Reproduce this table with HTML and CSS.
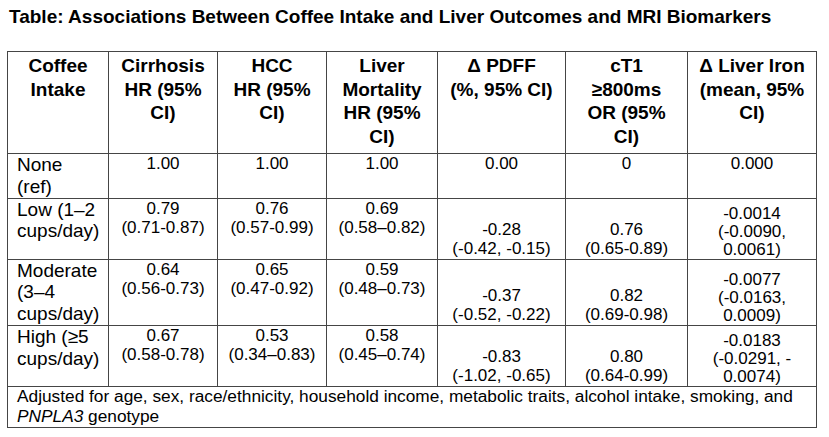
FILE: index.html
```html
<!DOCTYPE html>
<html lang="en">
<head>
<meta charset="utf-8">
<title>Coffee Intake and Liver Outcomes</title>
<link rel="stylesheet" href="styles.css">
</head>
<body>
<h1 class="title">Table: Associations Between Coffee Intake and Liver Outcomes and MRI Biomarkers</h1>
<table class="grid">
  <colgroup>
    <col class="w1"><col class="w2"><col class="w3"><col class="w4"><col class="w5"><col class="w6"><col class="w7">
  </colgroup>
  <thead>
    <tr class="r-head">
      <th>Coffee<br>Intake</th>
      <th>Cirrhosis<br>HR (95%<br>CI)</th>
      <th>HCC<br>HR (95%<br>CI)</th>
      <th>Liver<br>Mortality<br>HR (95%<br>CI)</th>
      <th>Δ PDFF<br>(%, 95% CI)</th>
      <th>cT1<br>≥800ms<br>OR (95%<br>CI)</th>
      <th>Δ Liver Iron<br>(mean, 95%<br>CI)</th>
    </tr>
  </thead>
  <tbody>
    <tr class="r-none">
      <td class="lbl">None<br>(ref)</td>
      <td class="num">1.00</td>
      <td class="num">1.00</td>
      <td class="num">1.00</td>
      <td class="num">0.00</td>
      <td class="num">0</td>
      <td class="num">0.000</td>
    </tr>
    <tr class="r-low">
      <td class="lbl">Low (1–2<br>cups/day)</td>
      <td class="num">0.79<br>(0.71-0.87)</td>
      <td class="num">0.76<br>(0.57-0.99)</td>
      <td class="num">0.69<br>(0.58–0.82)</td>
      <td class="num bot">-0.28<br>(-0.42, -0.15)</td>
      <td class="num bot">0.76<br>(0.65-0.89)</td>
      <td class="num bot iron">-0.0014<br>(-0.0090,<br>0.0061)</td>
    </tr>
    <tr class="r-mod">
      <td class="lbl">Moderate<br>(3–4<br>cups/day)</td>
      <td class="num">0.64<br>(0.56-0.73)</td>
      <td class="num">0.65<br>(0.47-0.92)</td>
      <td class="num">0.59<br>(0.48–0.73)</td>
      <td class="num bot">-0.37<br>(-0.52, -0.22)</td>
      <td class="num bot">0.82<br>(0.69-0.98)</td>
      <td class="num bot iron">-0.0077<br>(-0.0163,<br>0.0009)</td>
    </tr>
    <tr class="r-high">
      <td class="lbl">High (≥5<br>cups/day)</td>
      <td class="num">0.67<br>(0.58-0.78)</td>
      <td class="num">0.53<br>(0.34–0.83)</td>
      <td class="num">0.58<br>(0.45–0.74)</td>
      <td class="num bot">-0.83<br>(-1.02, -0.65)</td>
      <td class="num bot">0.80<br>(0.64-0.99)</td>
      <td class="num bot iron">-0.0183<br>(-0.0291, -<br>0.0074)</td>
    </tr>
  </tbody>
  <tfoot>
    <tr class="r-foot">
      <td class="note" colspan="7">Adjusted for age, sex, race/ethnicity, household income, metabolic traits, alcohol intake, smoking, and<br><i>PNPLA3</i> genotype</td>
    </tr>
  </tfoot>
</table>
</body>
</html>
```
FILE: styles.css
```css
html, body {
  background: #ffffff;
}
body {
  margin: 0;
  padding: 6px 0 0 7px;
  font-family: "Liberation Sans", Arial, Helvetica, sans-serif;
  color: #000000;
}
.title {
  margin: 0 0 23px 2px;
  font-size: 19px;
  line-height: 22px;
  font-weight: bold;
}
.grid {
  border-collapse: collapse;
  table-layout: fixed;
  width: 810px;
}
.w1 { width: 101px; }
.w2 { width: 109px; }
.w3 { width: 109px; }
.w4 { width: 111px; }
.w5 { width: 128px; }
.w6 { width: 122px; }
.w7 { width: 129px; }

.grid th,
.grid td {
  border: 1px solid #454545;
  padding: 0 4px;
  vertical-align: top;
  text-align: center;
}
.grid th {
  font-size: 19px;
  line-height: 23.5px;
  font-weight: bold;
  padding-top: 2px;
}
.grid td {
  font-size: 17px;
  line-height: 19.5px;
}
.grid td.lbl {
  text-align: left;
  font-size: 19px;
  line-height: 21.8px;
  padding-left: 9px;
}
.grid td.bot {
  vertical-align: bottom;
}
.grid td.iron {
  font-size: 17px;
  line-height: 18px;
}
.grid td.note {
  text-align: left;
  font-size: 17.3px;
  line-height: 19.8px;
  padding-left: 9px;
}
.r-head { height: 102px; }
.r-none { height: 44px; }
.r-low { height: 61px; }
.r-mod { height: 66px; }
.r-high { height: 61px; }
.r-foot { height: 41px; }
```
